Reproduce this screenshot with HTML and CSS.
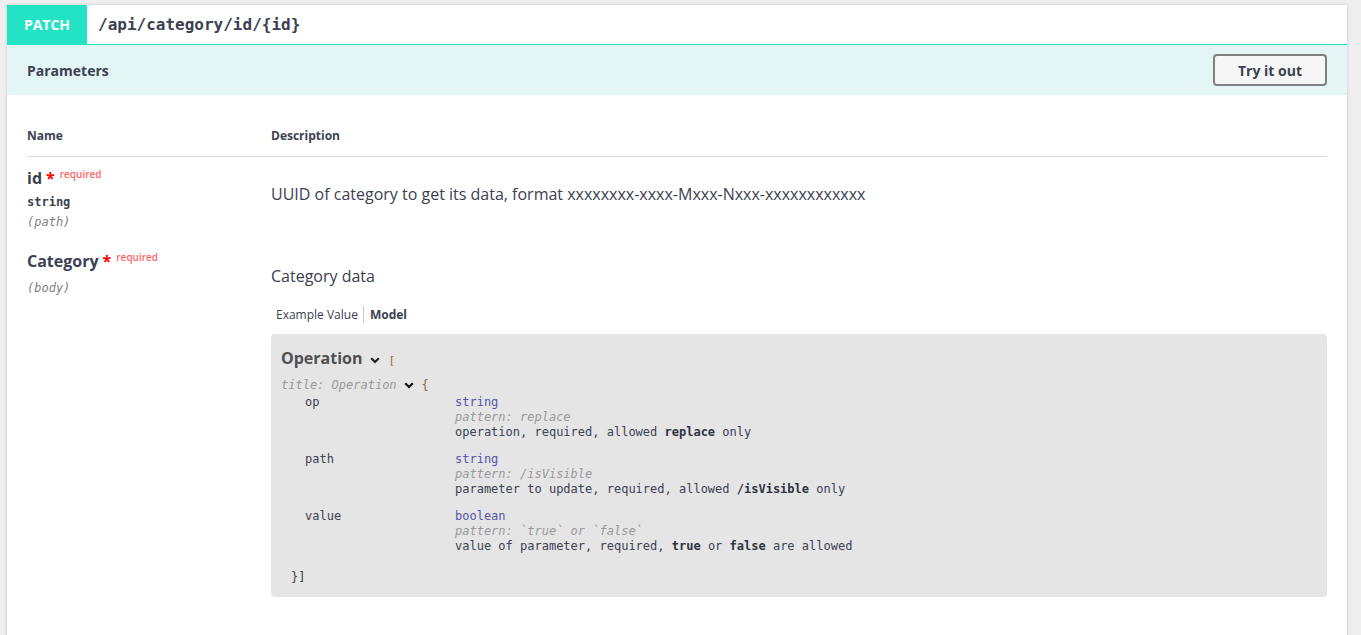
FILE: index.html
```html
<!DOCTYPE html>
<html lang="en">
<head>
<meta charset="utf-8">
<title>PATCH /api/category/id/{id}</title>
<link rel="stylesheet" href="styles.css">
</head>
<body>
<div class="opblock">
  <div class="opblock-summary">
    <span class="method">PATCH</span>
    <span class="path">/api/category/id/{id}</span>
  </div>
  <div class="section-header">
    <h4 class="section-title">Parameters</h4>
    <button class="try-out">Try it out</button>
  </div>
  <div class="table-container">
    <table class="parameters">
      <thead>
        <tr><th class="col-name">Name</th><th class="col-desc">Description</th></tr>
      </thead>
      <tbody>
        <tr>
          <td class="col-name">
            <div class="param-name">id<span class="star">*</span><span class="req">required</span></div>
            <div class="param-type">string</div>
            <div class="param-in">(path)</div>
          </td>
          <td class="col-desc">
            <p class="desc">UUID of category to get its data, format xxxxxxxx-xxxx-Mxxx-Nxxx-xxxxxxxxxxxx</p>
          </td>
        </tr>
        <tr>
          <td class="col-name">
            <div class="param-name">Category<span class="star">*</span><span class="req">required</span></div>
            <div class="param-type"></div>
            <div class="param-in">(body)</div>
          </td>
          <td class="col-desc">
            <p class="desc desc-tight">Category data</p>
            <ul class="tabs">
              <li class="tab">Example Value</li>
              <li class="tab active">Model</li>
            </ul>
            <div class="model-box">
              <div class="model-title-row">
                <span class="model-title">Operation</span><svg class="chev chev-title" width="10" height="7" viewBox="0 0 10 7"><polyline points="1.2,1.2 5,5 8.8,1.2" fill="none" stroke="#222" stroke-width="2.2"/></svg><span class="brace brace-sq">[</span>
              </div>
              <div class="model-subtitle">
                <span class="title-prop">title: Operation</span><svg class="chev chev-sub" width="10" height="7" viewBox="0 0 10 7"><polyline points="1.2,1.2 5,5 8.8,1.2" fill="none" stroke="#111" stroke-width="2.2"/></svg><span class="brace brace-curly">{</span>
              </div>
              <div class="props">
                <div class="prop">
                  <div class="prop-name">op</div>
                  <div class="prop-info">
                    <div class="prop-type">string</div>
                    <div class="prop-pattern">pattern: replace</div>
                    <div class="prop-desc">operation, required, allowed <b>replace</b> only</div>
                  </div>
                </div>
                <div class="prop">
                  <div class="prop-name">path</div>
                  <div class="prop-info">
                    <div class="prop-type">string</div>
                    <div class="prop-pattern">pattern: /isVisible</div>
                    <div class="prop-desc">parameter to update, required, allowed <b>/isVisible</b> only</div>
                  </div>
                </div>
                <div class="prop">
                  <div class="prop-name">value</div>
                  <div class="prop-info">
                    <div class="prop-type">boolean</div>
                    <div class="prop-pattern">pattern: `true` or `false`</div>
                    <div class="prop-desc">value of parameter, required, <b>true</b> or <b>false</b> are allowed</div>
                  </div>
                </div>
              </div>
              <div class="model-close">}]</div>
            </div>
          </td>
        </tr>
      </tbody>
    </table>
  </div>
</div>
</body>
</html>
```

FILE: styles.css
```css
* {
  box-sizing: border-box;
}

html,
body {
  margin: 0;
}

body {
  background: #efefef;
  padding: 5px 14px 0 7px;
  overflow: hidden;
  font-family: "Open Sans", "Liberation Sans", sans-serif;
  color: #3b4151;
}

.opblock {
  background: #fff;
  box-shadow: 0 0 3px rgba(0, 0, 0, 0.19);
  padding-bottom: 40px;
}

.opblock-summary {
  display: flex;
  align-items: stretch;
  height: 40px;
  border-bottom: 1px solid #22e3c4;
}

.method {
  width: 80px;
  display: flex;
  align-items: center;
  justify-content: center;
  background: #22e3c4;
  color: #fff;
  font-weight: 700;
  font-size: 14px;
}

.path {
  display: flex;
  align-items: center;
  padding-left: 11px;
  font-family: "DejaVu Sans Mono", monospace;
  font-size: 16px;
  font-weight: 600;
  color: #3b4151;
}

.section-header {
  display: flex;
  align-items: center;
  justify-content: space-between;
  height: 50px;
  padding: 0 20px;
  background: #e3f6f5;
}

.section-title {
  margin: 0;
  font-size: 14px;
  font-weight: 700;
}

.try-out {
  width: 114px;
  height: 32px;
  padding: 0;
  border: 2px solid #808080;
  border-radius: 4px;
  background: #f6f6f6;
  font-family: "Open Sans", sans-serif;
  font-size: 14px;
  font-weight: 700;
  color: #3b4151;
}

.table-container {
  padding: 20px;
}

.parameters {
  width: 100%;
  border-collapse: collapse;
}

.parameters th {
  text-align: left;
  font-size: 12px;
  font-weight: 700;
  line-height: 17px;
  padding: 12px 0;
  border-bottom: 1px solid #d8d9dc;
}

.col-name {
  width: 244px;
}

.parameters td {
  padding: 10px 0;
  vertical-align: top;
}

.param-name {
  font-size: 16px;
  font-weight: 700;
  line-height: 22px;
}

.param-name + .param-type {
  margin-top: 0;
}

.star {
  color: red;
  margin-left: 4px;
}

.req {
  margin-left: 5px;
  font-size: 10px;
  font-weight: 600;
  line-height: 1;
  color: #ff6666;
  vertical-align: 6px;
}

.param-type {
  font-family: "DejaVu Sans Mono", monospace;
  font-size: 12px;
  font-weight: 600;
  line-height: 17px;
  padding: 5px 0 3px;
}

.param-in {
  font-family: "DejaVu Sans Mono", monospace;
  font-size: 12px;
  font-style: italic;
  line-height: 16px;
  color: #808080;
}

.desc {
  margin: 16px 0;
  font-size: 16px;
  line-height: 22px;
}

.desc-tight {
  margin-top: 15px;
  margin-bottom: 0;
}

.tabs {
  display: flex;
  list-style: none;
  margin: 19px 0 0;
  padding: 0 0 0 5px;
  font-size: 12px;
  line-height: 17px;
}

.tab:first-child {
  padding-right: 5px;
  border-right: 1px solid #c8c8c8;
}

.tab.active {
  padding-left: 6px;
  font-weight: 700;
}

.model-box {
  margin-top: 11px;
  background: #e5e5e5;
  border-radius: 4px;
  padding: 12px 10px 12px;
  font-family: "DejaVu Sans Mono", monospace;
  font-size: 12px;
  color: #3b4151;
}

.model-title-row {
  line-height: 24px;
  height: 24px;
}

.model-title {
  font-family: "Open Sans", sans-serif;
  font-size: 16px;
  font-weight: 700;
  color: #505050;
}

.chev {
  vertical-align: middle;
}

.chev-title {
  margin-left: 7px;
}

.brace {
  color: #8a6a3a;
}

.brace-sq {
  margin-left: 9px;
  font-size: 11px;
}

.model-subtitle {
  margin-top: 7px;
  line-height: 16px;
}

.title-prop {
  font-style: italic;
  color: #999;
}

.chev-sub {
  margin-left: 7px;
}

.brace-curly {
  margin-left: 8px;
}

.props {
  margin-top: 2px;
  margin-left: 24px;
}

.prop {
  display: grid;
  grid-template-columns: 150px 1fr;
  line-height: 15px;
}

.prop + .prop {
  margin-top: 12px;
}

.prop-type {
  color: #55a;
}

.prop-pattern {
  font-style: italic;
  color: #999;
}

.prop-desc b {
  font-weight: 700;
  color: #2f3340;
}

.model-close {
  margin-top: 16px;
  margin-left: 10px;
  line-height: 15px;
}
```
